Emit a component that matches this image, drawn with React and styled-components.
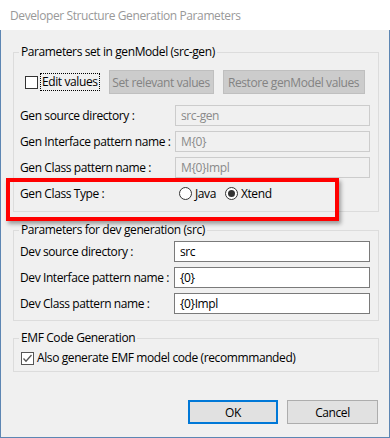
import React from "react";
import styled, { createGlobalStyle } from "styled-components";

const GlobalStyle = createGlobalStyle`
  html, body {
    margin: 0;
    padding: 0;
    background: #f0f0f0;
  }
  body {
    font-family: "Segoe UI", "Open Sans", "Noto Sans", sans-serif;
    font-size: 12px;
    letter-spacing: -0.4px;
    color: #000;
    white-space: nowrap;
  }
  * {
    box-sizing: border-box;
  }
`;

const Window = styled.div`
  width: 390px;
  height: 438px;
  display: flex;
  flex-direction: column;
  background: #f0f0f0;
`;

const TitleBar = styled.div`
  height: 30px;
  flex: none;
  display: flex;
  align-items: center;
  padding-left: 10px;
  background: #fff;
  color: #999;
  font-size: 12px;
`;

const Body = styled.div`
  flex: 1;
  display: flex;
  flex-direction: column;
  padding: 14px 10px 0 12px;
  border: 1px solid #5d86b3;
  border-top: none;
`;

const Group = styled.fieldset`
  margin: ${(p) => p.$top || 0}px 0 0 0;
  padding: 0 8px ${(p) => p.$bottom || 7}px 6px;
  border: 1px solid #dcdcdc;
  min-width: 0;
`;

const Legend = styled.legend`
  margin-left: -1px;
  padding: 0 2px;
  line-height: 16px;
  height: 16px;
`;

const ToolRow = styled.div`
  display: flex;
  align-items: center;
  margin: 10px 0 0 5px;
  height: 24px;
`;

const CheckLabel = styled.label`
  display: flex;
  align-items: center;
  gap: 3px;
  line-height: 16px;
`;

const Box = styled.span`
  width: 13px;
  height: 13px;
  flex: none;
  display: inline-flex;
  align-items: center;
  justify-content: center;
  background: #fff;
  border: 1px solid ${(p) => (p.$checked ? "#555" : "#333")};
`;

const FocusText = styled.span`
  padding: 0 1px;
  outline: ${(p) => (p.$focus ? "1px dotted #000" : "none")};
`;

const GreyButton = styled.button`
  height: 24px;
  width: ${(p) => p.$w}px;
  margin-left: ${(p) => p.$gap}px;
  padding: 0;
  font: inherit;
  letter-spacing: inherit;
  white-space: nowrap;
  background: #cccccc;
  border: 1px solid #bfbfbf;
  color: #838383;
`;

const Rows = styled.div`
  display: flex;
  flex-direction: column;
  gap: 5px;
  margin-top: ${(p) => p.$top}px;
`;

const Row = styled.div`
  position: relative;
  display: grid;
  grid-template-columns: ${(p) => p.$label}px 1fr;
  align-items: center;
  height: 21px;

  &::after {
    content: ${(p) => (p.$marked ? "''" : "none")};
    position: absolute;
    left: -14px;
    top: -5px;
    width: 325px;
    height: 35px;
    border: 4px solid #f00;
    box-shadow: 2px 3px 4px rgba(0, 0, 0, 0.35);
    pointer-events: none;
    z-index: 2;
  }
`;

const TextBox = styled.div`
  height: 21px;
  display: flex;
  align-items: center;
  padding-left: 5px;
  border: 1px solid ${(p) => (p.$disabled ? "#cccccc" : "#7a7a7a")};
  background: ${(p) => (p.$disabled ? "#f0f0f0" : "#fff")};
  color: ${(p) => (p.$disabled ? "#8a8a8a" : "#000")};
`;

const Radios = styled.div`
  display: flex;
  align-items: center;
  padding-left: 4px;
  gap: 9px;
`;

const RadioItem = styled.label`
  display: flex;
  align-items: center;
  gap: 3px;
`;

const Circle = styled.span`
  width: 13px;
  height: 13px;
  border-radius: 50%;
  border: 1px solid #333;
  background: #fff;
  display: inline-flex;
  align-items: center;
  justify-content: center;

  &::before {
    content: ${(p) => (p.$on ? "''" : "none")};
    width: 7px;
    height: 7px;
    border-radius: 50%;
    background: #333;
  }
`;

const CheckRow = styled.div`
  display: flex;
  align-items: center;
  margin: 4px 0 0 1px;
  height: 16px;
`;

const Footer = styled.div`
  display: flex;
  justify-content: flex-end;
  gap: 9px;
  margin: 28px 1px 0 0;
`;

const DialogButton = styled.button`
  width: ${(p) => p.$w}px;
  height: 24px;
  padding: 0;
  font: inherit;
  letter-spacing: inherit;
  color: #000;
  background: #e1e1e1;
  border: ${(p) => (p.$default ? "2px solid #0078d7" : "1px solid #adadad")};
`;

const Check = () => (
  <svg width="11" height="11" viewBox="0 0 11 11">
    <path d="M1.5 5.5 L4 8.2 L9.5 2" fill="none" stroke="#555" strokeWidth="1.3" />
  </svg>
);

const genRows = [
  ["Gen source directory :", "src-gen"],
  ["Gen Interface pattern name :", "M{0}"],
  ["Gen Class pattern name :", "M{0}Impl"],
];

const devRows = [
  ["Dev source directory :", "src"],
  ["Dev Interface pattern name :", "{0}"],
  ["Dev Class pattern name :", "{0}Impl"],
];

export default function App() {
  return (
    <Window>
      <GlobalStyle />
      <TitleBar>Developer Structure Generation Parameters</TitleBar>
      <Body>
        <Group>
          <Legend>Parameters set in genModel (src-gen)</Legend>
          <ToolRow>
            <CheckLabel>
              <Box />
              <FocusText $focus>Edit values</FocusText>
            </CheckLabel>
            <GreyButton $w={105} $gap={10}>Set relevant values</GreyButton>
            <GreyButton $w={142} $gap={9}>Restore genModel values</GreyButton>
          </ToolRow>
          <Rows $top={11}>
            {genRows.map(([label, value]) => (
              <Row key={label} $label={155}>
                <span>{label}</span>
                <TextBox $disabled>{value}</TextBox>
              </Row>
            ))}
            <Row $label={155} $marked>
              <span>Gen Class Type :</span>
              <Radios>
                <RadioItem>
                  <Circle />
                  Java
                </RadioItem>
                <RadioItem>
                  <Circle $on />
                  Xtend
                </RadioItem>
              </Radios>
            </Row>
          </Rows>
        </Group>

        <Group $top={10} $bottom={6}>
          <Legend>Parameters for dev generation (src)</Legend>
          <Rows $top={3}>
            {devRows.map(([label, value]) => (
              <Row key={label} $label={154}>
                <span>{label}</span>
                <TextBox>{value}</TextBox>
              </Row>
            ))}
          </Rows>
        </Group>

        <Group $top={9} $bottom={5}>
          <Legend>EMF Code Generation</Legend>
          <CheckRow>
            <CheckLabel>
              <Box $checked>
                <Check />
              </Box>
              <span>Also generate EMF model code (recommmanded)</span>
            </CheckLabel>
          </CheckRow>
        </Group>

        <Footer>
          <DialogButton $w={90} $default>
            OK
          </DialogButton>
          <DialogButton $w={91}>Cancel</DialogButton>
        </Footer>
      </Body>
    </Window>
  );
}
